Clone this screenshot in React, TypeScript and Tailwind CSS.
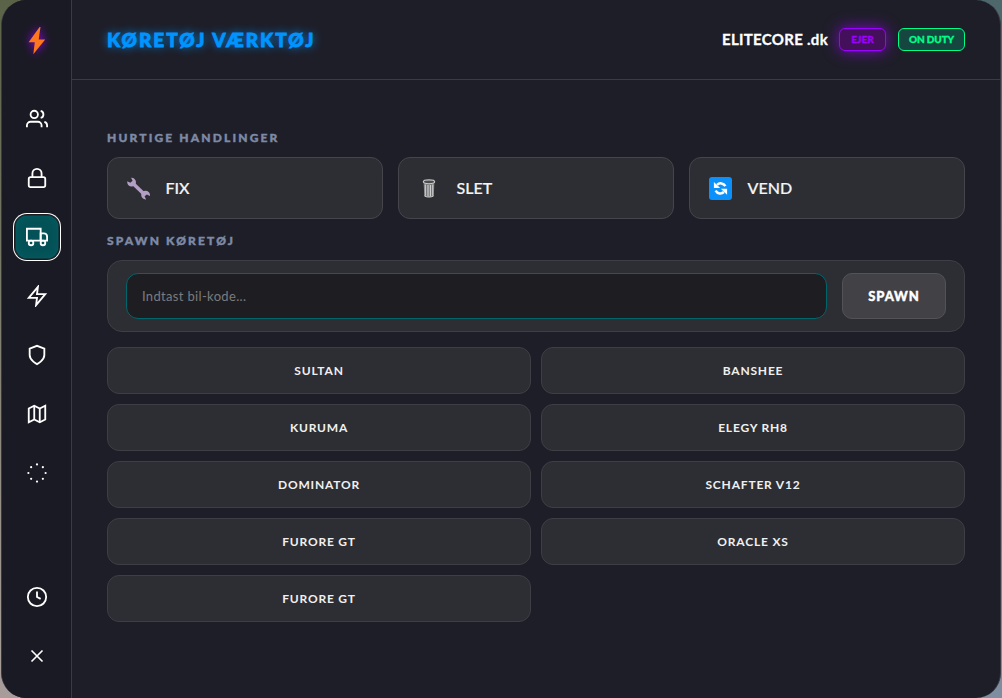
import { useState } from 'react';
import type { ReactNode } from 'react';

const VEHICLES = [
  { id: 1, name: 'SULTAN' },
  { id: 2, name: 'BANSHEE' },
  { id: 3, name: 'KURUMA' },
  { id: 4, name: 'ELEGY RH8' },
  { id: 5, name: 'DOMINATOR' },
  { id: 6, name: 'SCHAFTER V12' },
  { id: 7, name: 'FURORE GT' },
  { id: 8, name: 'ORACLE XS' },
  { id: 9, name: 'FURORE GT' },
];

const DOTS = [
  [12, 2.6],
  [18.4, 5.6],
  [21.4, 12],
  [18.4, 18.4],
  [12, 21.4],
  [5.6, 18.4],
  [2.6, 12],
  [5.6, 5.6],
];

const NAV: { id: string; label: string; icon: ReactNode }[] = [
  {
    id: 'players',
    label: 'Spillere',
    icon: (
      <>
        <path d="M17 21v-2a4 4 0 0 0-4-4H5a4 4 0 0 0-4 4v2" />
        <circle cx="9" cy="7" r="4" />
        <path d="M23 21v-2a4 4 0 0 0-3-3.87M16 3.13a4 4 0 0 1 0 7.75" />
      </>
    ),
  },
  {
    id: 'lock',
    label: 'Lås',
    icon: (
      <>
        <rect x="3" y="11" width="18" height="11" rx="2" />
        <path d="M7 11V7a5 5 0 0 1 10 0v4" />
      </>
    ),
  },
  {
    id: 'vehicle',
    label: 'Køretøj',
    icon: (
      <>
        <path d="M1 3h15v13H1z" />
        <path d="M16 8h3.5a3.5 3.5 0 0 1 3.5 3.5V16h-7z" />
        <circle cx="5.5" cy="18.5" r="2.5" />
        <circle cx="18.5" cy="18.5" r="2.5" />
      </>
    ),
  },
  { id: 'actions', label: 'Handlinger', icon: <path d="M13 2 3 14h9l-1 8 10-12h-9l1-8z" /> },
  { id: 'admin', label: 'Admin', icon: <path d="M12 22s8-4 8-10V5l-8-3-8 3v7c0 6 8 10 8 10z" /> },
  {
    id: 'map',
    label: 'Kort',
    icon: (
      <>
        <path d="M3 6l6-3 6 3 6-3v15l-6 3-6-3-6 3z" />
        <path d="M9 3v15M15 6v15" />
      </>
    ),
  },
  {
    id: 'misc',
    label: 'Diverse',
    icon: DOTS.map(([x, y]) => (
      <circle key={`${x}-${y}`} cx={x} cy={y} r="1.2" fill="currentColor" stroke="none" />
    )),
  },
];

const FOOTER_NAV: typeof NAV = [
  {
    id: 'duty',
    label: 'Vagt',
    icon: (
      <>
        <circle cx="12" cy="12" r="10" />
        <path d="M12 6v6l4 2" />
      </>
    ),
  },
  { id: 'close', label: 'Luk', icon: <path d="M18 6 6 18M6 6l12 12" strokeWidth="1.8" /> },
];

function WrenchIcon() {
  return (
    <svg className="h-6 w-6" viewBox="-0.5 -0.5 24 24" fill="none">
      <path d="M6 6.5 18 18" stroke="#b39fc4" strokeWidth="3.6" />
      <path d="M4.6 1.3a4.4 4.4 0 1 1-3.8 3.4l3 1.5 2.3-1.9z" fill="#b39fc4" />
      <path d="M19.6 22.9a4.4 4.4 0 1 1 3.8-3.5l-3-1.5-2.3 1.9z" fill="#b39fc4" />
    </svg>
  );
}

function TrashIcon() {
  return (
    <svg className="h-6 w-6" viewBox="0 -0.5 24 24" fill="none">
      <path d="M6.6 6.2 7.3 19.5c.4 1.8 9 1.8 9.4 0l.7-13.3z" fill="#77787a" />
      <path d="M8.3 8v11.3M11 8.5V20M13.4 8.5V20M15.8 8v11.3" stroke="#d2d2d2" strokeWidth="1.1" />
      <path d="M7.3 19.2c1 1.7 8.4 1.7 9.4 0" stroke="#c4c4c4" strokeWidth="1" />
      <ellipse cx="12" cy="5.3" rx="5.7" ry="1.9" fill="#4b4c4e" stroke="#c9c9c9" strokeWidth="1.1" />
    </svg>
  );
}

function FlipIcon() {
  return (
    <svg className="h-6 w-6" viewBox="-0.5 -0.3 24 24" fill="none">
      <rect x="0.5" y="0.7" width="23" height="23" rx="3" fill="#0a91fb" />
      <path d="M8.6 8.5c2.3-2.2 6.4-2 8.3 1.4M15.4 15.7c-2.3 2.2-6.4 2-8.3-1.4" stroke="#fff" strokeWidth="2.5" />
      <path d="M5.4 5.7v6h6.3zM18.6 18.5v-6h-6.3z" fill="#fff" />
    </svg>
  );
}

const QUICK_ACTIONS = [
  { id: 'fix', label: 'FIX', icon: <WrenchIcon /> },
  { id: 'delete', label: 'SLET', icon: <TrashIcon /> },
  { id: 'flip', label: 'VEND', icon: <FlipIcon /> },
];

function NavButton({ label, active, onClick, children }: {
  label: string;
  active?: boolean;
  onClick?: () => void;
  children: ReactNode;
}) {
  return (
    <button
      type="button"
      aria-label={label}
      onClick={onClick}
      className={`flex h-[44px] w-[44px] shrink-0 items-center justify-center rounded-[12px] text-white ${
        active
          ? 'bg-[#045257] shadow-[0_0_0_1px_#1d1d20,0_0_0_2px_#ffffff,inset_0_0_0_0.5px_#1d1d20,inset_0_0_10px_rgba(0,110,115,0.5)]'
          : ''
      }`}
    >
      <svg className="h-[22px] w-[22px]" viewBox="0 0 24 24" fill="none" stroke="currentColor" strokeWidth="2">
        {children}
      </svg>
    </button>
  );
}

export default function App() {
  const [tab, setTab] = useState('vehicle');
  const [code, setCode] = useState('');

  return (
    <div className="h-[698px] w-[1002px] overflow-hidden bg-[conic-gradient(from_45deg,#466264,#8793a8_90deg,#b3a5a6_180deg,#4f5a3c_270deg,#466264)] px-px font-['Lato','Open_Sans',sans-serif]">
      <div className="flex h-full overflow-hidden rounded-[25px] border-x border-[#3a3a42] bg-[#1e1e28]">
        <aside className="flex w-[70px] shrink-0 flex-col items-center border-r border-[#3b3b44] bg-[#1a1a24] pb-5 pt-[26px]">
          <svg
            className="h-[30px] w-[30px] drop-shadow-[0_0_5px_#9d00ff]"
            viewBox="0 0 30 30"
            fill="#ff771c"
          >
            <path d="M17.6 1 6.6 16.2h6.2L11.3 28.2 23.2 13.4h-6.5l1.8-12.4z" />
          </svg>
          <nav className="mt-[41px] flex flex-col gap-[15px]">
            {NAV.map((item) => (
              <NavButton
                key={item.id}
                label={item.label}
                active={tab === item.id}
                onClick={() => setTab(item.id)}
              >
                {item.icon}
              </NavButton>
            ))}
          </nav>
          <div className="mt-auto flex flex-col gap-[15px]">
            {FOOTER_NAV.map((item) => (
              <NavButton key={item.id} label={item.label}>
                {item.icon}
              </NavButton>
            ))}
          </div>
        </aside>

        <main className="flex min-w-0 flex-1 flex-col">
          <header className="flex h-[80px] shrink-0 items-center justify-between border-b border-[#3b3b44] px-[35px]">
            <h1 className="pt-px text-[19px] font-black tracking-[2px] text-[#0094ff] [-webkit-text-stroke:0.8px_#0094ff] [text-shadow:0_0_10px_#0094ff]">
              KØRETØJ VÆRKTØJ
            </h1>
            <div className="flex items-center">
              <span className="text-[15px] font-bold tracking-[0.3px] text-white [-webkit-text-stroke:0.3px_#fff]">
                ELITECORE .dk
              </span>
              <span className="ml-[11px] flex h-[23px] w-[47px] items-center justify-center rounded-[6px] border border-[#9d00ff] bg-[#44105b] text-[10px] font-black text-[#9d00ff] shadow-[0_0_15px_rgba(157,0,255,0.75)] [-webkit-text-stroke:0.3px_#9d00ff]">
                EJER
              </span>
              <span className="ml-[12px] flex h-[23px] w-[67px] items-center justify-center rounded-[6px] border border-[#00ff88] bg-[#15463f] text-[10px] font-black tracking-[-0.1px] text-[#00ff88] [-webkit-text-stroke:0.3px_#00ff88]">
                ON DUTY
              </span>
            </div>
          </header>

          <div className="px-[35px] pt-[50px]">
            <h2 className="h-[27px] text-[12px] font-black leading-[16px] tracking-[2.15px] text-[#7d8aa5] [-webkit-text-stroke:0.4px_#7d8aa5]">
              HURTIGE HANDLINGER
            </h2>
            <div className="grid grid-cols-3 gap-[15px]">
              {QUICK_ACTIONS.map((action) => (
                <button
                  key={action.id}
                  type="button"
                  className="flex h-[62px] items-center gap-[15.5px] rounded-[12px] border border-[#45454b] bg-[#2d2e33] px-[18px] text-[16px] font-medium text-[#f5f5f5] [-webkit-text-stroke:0.2px_#f5f5f5]"
                >
                  {action.icon}
                  {action.label}
                </button>
              ))}
            </div>

            <h2 className="mt-[14px] h-[27px] text-[12px] font-black leading-[16px] tracking-[2.15px] text-[#7d8aa5] [-webkit-text-stroke:0.4px_#7d8aa5]">
              SPAWN KØRETØJ
            </h2>
            <div className="flex h-[72px] items-center gap-[15px] rounded-[15px] border border-[#3e3e46] bg-[#2d2e33] px-[18px]">
              <input
                value={code}
                onChange={(e) => setCode(e.target.value)}
                placeholder="Indtast bil-kode..."
                className="h-[46px] min-w-0 flex-1 rounded-[12px] border border-[#00666b] bg-[#1e1e22] px-[15px] text-[13px] tracking-[0.33px] text-white outline-none placeholder:text-[#7b7b7d]"
              />
              <button
                type="button"
                className="h-[46px] w-[104px] rounded-[10px] border border-[#525257] bg-[#424146] pt-[2px] text-[13px] font-black tracking-[0.9px] text-white [-webkit-text-stroke:0.4px_#fff]"
              >
                SPAWN
              </button>
            </div>

            <div className="mt-[15px] grid grid-cols-2 gap-[10px]">
              {VEHICLES.map((v) => (
                <button
                  key={v.id}
                  type="button"
                  className="h-[47px] rounded-[12px] border border-[#3e3e46] bg-[#2d2e33] text-[12px] font-bold tracking-[0.8px] text-[#f0f0f0]"
                >
                  {v.name}
                </button>
              ))}
            </div>
          </div>
        </main>
      </div>
    </div>
  );
}
